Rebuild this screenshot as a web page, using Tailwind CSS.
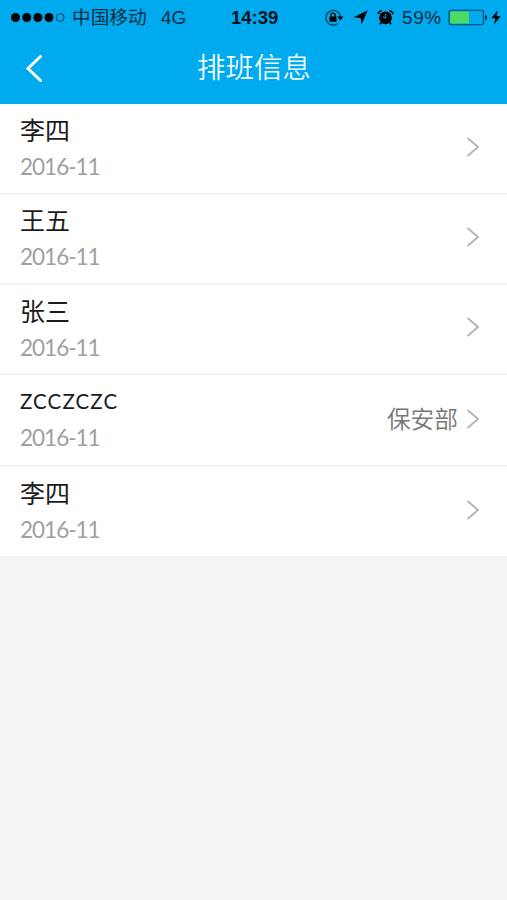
<!DOCTYPE html>
<html lang="zh-CN">

<head>
    <meta charset="UTF-8" />
    <meta name="viewport" content="width=device-width, initial-scale=1.0" />
    <title>排班信息</title>
    <script src="https://cdn.jsdelivr.net/npm/@tailwindcss/browser@4"></script>
</head>

<body class="bg-[#f4f4f4] min-h-screen overflow-hidden font-['Lato','Noto_Sans_CJK_SC',sans-serif]">
    <header class="h-[104px] bg-[#00aaef]">
        <!-- Status bar -->
        <div class="flex items-center h-[35px] pl-[11px] pr-[5px] text-[#062c40] font-['Liberation_Sans','Noto_Sans_CJK_SC',sans-serif]">
            <svg class="shrink-0" width="54" height="12" viewBox="0 0 54 12">
                <g fill="#000">
                    <circle cx="4.5" cy="5.5" r="4.5" />
                    <circle cx="15.7" cy="5.5" r="4.5" />
                    <circle cx="26.9" cy="5.5" r="4.5" />
                    <circle cx="38" cy="5.5" r="4.5" />
                </g>
                <circle cx="49.2" cy="5.5" r="3.9" fill="none" stroke="#063a55" stroke-width="1" />
            </svg>
            <span class="ml-[7px] w-[75px] pt-[2px] text-[18.7px] leading-none whitespace-nowrap">中国移动</span>
            <span class="ml-[14px] w-[26px] pb-px text-[19px] leading-none">4G</span>
            <span class="ml-[44px] w-[49px] pt-px text-[18.5px] leading-none font-bold text-[#02141e]">14:39</span>
            <svg class="ml-[44px] shrink-0" width="20" height="18" viewBox="0 0 20 18" fill="none">
                <path d="M15.3 4.4A7.4 7.4 0 1 0 14 14.5" stroke="#063a55" stroke-width="1.3" />
                <path d="M15.3 4.2Q16.4 6 16.4 8" stroke="#063a55" stroke-width="1.3" />
                <path d="M13.2 7.5h6.2l-3.1 4z" fill="#000" />
                <rect x="5.5" y="7.6" width="7" height="5.2" rx=".5" fill="#000" />
                <path d="M6.9 8V6.2a2.1 2.1 0 0 1 4.2 0V8" stroke="#000" stroke-width="1.3" />
            </svg>
            <svg class="ml-[9px] shrink-0" width="15" height="15" viewBox="0 0 15 15" fill="#000">
                <path d="M14.6.4 8.6 14.6 7.6 8 .4 7.2z" />
            </svg>
            <svg class="ml-[9px] shrink-0" width="17" height="17" viewBox="0 0 17 17" fill="none">
                <circle cx="8.5" cy="8.8" r="6.4" fill="#000" />
                <path d="M1 5.2Q1.6 2.3 4.6 1.4M16 5.2Q15.4 2.3 12.4 1.4" stroke="#000" stroke-width="1.6" />
                <path d="m4.4 13.3-1.5 2M12.6 13.3l1.5 2" stroke="#000" stroke-width="1.6" />
                <path d="M8.7 5v4.1L6 8" stroke="#00aaef" stroke-width="1" />
            </svg>
            <span class="ml-[8px] w-[40px] text-[19px] leading-none tracking-[0.6px]">59%</span>
            <svg class="ml-[6px] shrink-0" width="40" height="17" viewBox="0 0 40 17" fill="none">
                <rect x="1" y="1.2" width="34.5" height="14.6" rx="2.5" stroke="#07405c" stroke-width="1.1" />
                <path d="M3.5 2.5H21v12H3.5a1.3 1.3 0 0 1-1.3-1.3V3.8a1.3 1.3 0 0 1 1.3-1.3z" fill="#4cd964" />
                <path d="M37 5.8q2 .5 2 2.7t-2 2.7z" fill="#05293b" />
            </svg>
            <svg class="ml-[3px] shrink-0" width="10" height="15" viewBox="0 0 10 15" fill="#000">
                <path d="M6.5.6.4 8.3h4L2.9 14.4l6.7-8.2H5.7z" />
            </svg>
        </div>

        <!-- Nav bar -->
        <div class="grid grid-cols-[1fr_auto_1fr] items-center h-[66px] px-[25px]">
            <button class="cursor-pointer w-fit" aria-label="返回">
                <svg width="19" height="29" viewBox="0 0 19 29" fill="none">
                    <path d="M15.5 2.5 3 14.5l12.5 12" stroke="white" stroke-width="3" stroke-linecap="round" />
                </svg>
            </button>
            <h1 class="pl-px pb-px text-[28.5px] leading-none font-[350] text-white/95">排班信息</h1>
        </div>
    </header>

    <!-- Schedule list -->
    <ul class="bg-white text-[#1c1c1c]">
        <li class="flex justify-between h-[91px] pt-[7px] pl-[20px] pr-[27px] border-b-2 border-[#f4f4f4]">
            <div>
                <p class="h-[36px] text-[25px] leading-[38px]">李四</p>
                <p class="text-[22.5px] leading-[40px] tracking-[-1px] text-[#a0a0a0]">2016-11</p>
            </div>
            <svg class="mt-[26px]" width="14" height="20" viewBox="0 0 14 20" fill="none">
                <path d="m1.5 1 10.5 9L1.5 19" stroke="#b5b5b5" stroke-width="2" />
            </svg>
        </li>
        <li class="flex justify-between h-[90px] pt-[6px] pl-[20px] pr-[27px] border-b-2 border-[#f4f4f4]">
            <div>
                <p class="h-[36px] text-[25px] leading-[38px]">王五</p>
                <p class="text-[22.5px] leading-[40px] tracking-[-1px] text-[#a0a0a0]">2016-11</p>
            </div>
            <svg class="mt-[26px]" width="14" height="20" viewBox="0 0 14 20" fill="none">
                <path d="m1.5 1 10.5 9L1.5 19" stroke="#b5b5b5" stroke-width="2" />
            </svg>
        </li>
        <li class="flex justify-between h-[90px] pt-[7px] pl-[20px] pr-[27px] border-b-2 border-[#f4f4f4]">
            <div>
                <p class="h-[36px] text-[25px] leading-[38px]">张三</p>
                <p class="text-[22.5px] leading-[40px] tracking-[-1px] text-[#a0a0a0]">2016-11</p>
            </div>
            <svg class="mt-[25px]" width="14" height="20" viewBox="0 0 14 20" fill="none">
                <path d="m1.5 1 10.5 9L1.5 19" stroke="#b5b5b5" stroke-width="2" />
            </svg>
        </li>
        <li class="flex justify-between h-[92px] pt-[7px] pl-[20px] pr-[27px] border-b-2 border-[#f4f4f4]">
            <div>
                <p class="h-[36px] text-[20.5px] leading-[39px] tracking-[1.1px]">ZCCZCZC</p>
                <p class="text-[22.5px] leading-[40px] tracking-[-1px] text-[#a0a0a0]">2016-11</p>
            </div>
            <div class="flex items-center gap-[8px] h-[24px] mt-[25px]">
                <span class="pt-[2px] text-[23.7px] leading-none font-[350] text-[#777]">保安部</span>
                <svg width="14" height="20" viewBox="0 0 14 20" fill="none">
                    <path d="m1.5 1 10.5 9L1.5 19" stroke="#b5b5b5" stroke-width="2" />
                </svg>
            </div>
        </li>
        <li class="flex justify-between h-[89px] pt-[7px] pl-[20px] pr-[27px]">
            <div>
                <p class="h-[36px] text-[25px] leading-[38px]">李四</p>
                <p class="text-[22.5px] leading-[40px] tracking-[-1px] text-[#a0a0a0]">2016-11</p>
            </div>
            <svg class="mt-[26px]" width="14" height="20" viewBox="0 0 14 20" fill="none">
                <path d="m1.5 1 10.5 9L1.5 19" stroke="#b5b5b5" stroke-width="2" />
            </svg>
        </li>
    </ul>
</body>

</html>
